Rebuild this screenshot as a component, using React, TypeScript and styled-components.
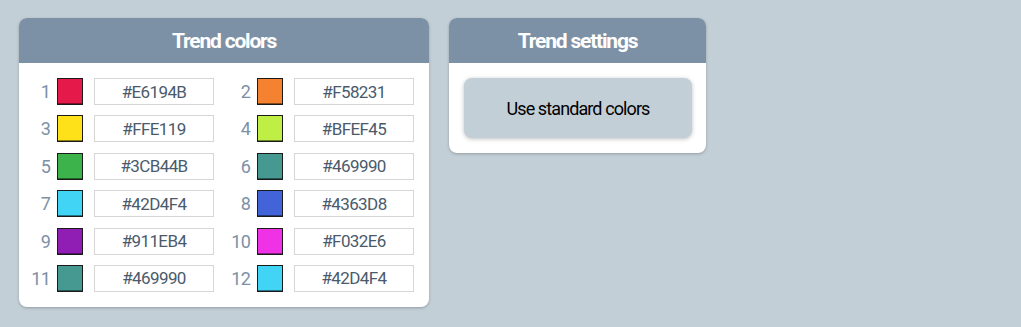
import React from "react";
import styled, { createGlobalStyle } from "styled-components";

const GlobalStyle = createGlobalStyle`
  html, body {
    margin: 0;
    padding: 0;
    background: #c3cfd7;
    font-family: Roboto, "Liberation Sans", sans-serif;
  }
`;

const trendColors = [
  "#E6194B",
  "#F58231",
  "#FFE119",
  "#BFEF45",
  "#3CB44B",
  "#469990",
  "#42D4F4",
  "#4363D8",
  "#911EB4",
  "#F032E6",
  "#469990",
  "#42D4F4",
];

const Page = styled.div`
  display: flex;
  align-items: flex-start;
  gap: 20px;
  padding: 18px 19px;
`;

const Panel = styled.section<{ width: number }>`
  width: ${p => p.width}px;
  background: #fff;
  border-radius: 8px;
  overflow: hidden;
  box-shadow: 0 1px 3px rgba(0, 0, 0, 0.25);
`;

const PanelHeader = styled.header`
  height: 45px;
  background: #7c91a6;
  color: #fff;
  display: flex;
  align-items: center;
  justify-content: center;
  font-size: 21px;
  font-weight: 700;
  letter-spacing: -1.2px;
`;

const ColorGrid = styled.div`
  display: grid;
  grid-template-columns: repeat(2, 190px);
  column-gap: 10px;
  row-gap: 10.4px;
  padding: 15px 15px 15px 5px;
`;

const ColorEntry = styled.div`
  display: flex;
  align-items: center;
  height: 27px;
`;

const Index = styled.span`
  width: 26px;
  margin-right: 7px;
  text-align: right;
  color: #7c91a6;
  font-size: 18px;
  letter-spacing: -0.8px;
`;

const Swatch = styled.div<{ color: string }>`
  box-sizing: border-box;
  width: 26px;
  height: 27px;
  margin-right: 11px;
  background: ${p => p.color};
  border: 1px solid #1a1a1a;
  box-shadow: inset 0 -1px 0 rgba(0, 0, 0, 0.45);
`;

const HexInput = styled.input`
  box-sizing: border-box;
  width: 120px;
  height: 27px;
  border: 1px solid #d6d6d6;
  background: #fff;
  color: #4a5a6c;
  font-family: Roboto, "Liberation Sans", sans-serif;
  font-size: 17px;
  letter-spacing: -0.6px;
  text-align: center;
  padding: 0;
  outline: none;
`;

const SettingsBody = styled.div`
  padding: 15px 14px 15px 15px;
`;

const StandardButton = styled.button`
  width: 228px;
  height: 60px;
  border: none;
  border-radius: 8px;
  background: #c3cfd7;
  box-shadow: 0 1px 4px rgba(0, 0, 0, 0.25);
  color: #000;
  font-family: Roboto, "Liberation Sans", sans-serif;
  font-size: 18px;
  letter-spacing: -0.9px;
  cursor: pointer;
`;

export default function App() {
  return (
    <>
      <GlobalStyle />
      <Page>
        <Panel width={410}>
          <PanelHeader>Trend colors</PanelHeader>
          <ColorGrid>
            {trendColors.map((c, i) => (
              <ColorEntry key={i}>
                <Index>{i + 1}</Index>
                <Swatch color={c} />
                <HexInput readOnly value={c} />
              </ColorEntry>
            ))}
          </ColorGrid>
        </Panel>
        <Panel width={257}>
          <PanelHeader>Trend settings</PanelHeader>
          <SettingsBody>
            <StandardButton>Use standard colors</StandardButton>
          </SettingsBody>
        </Panel>
      </Page>
    </>
  );
}
